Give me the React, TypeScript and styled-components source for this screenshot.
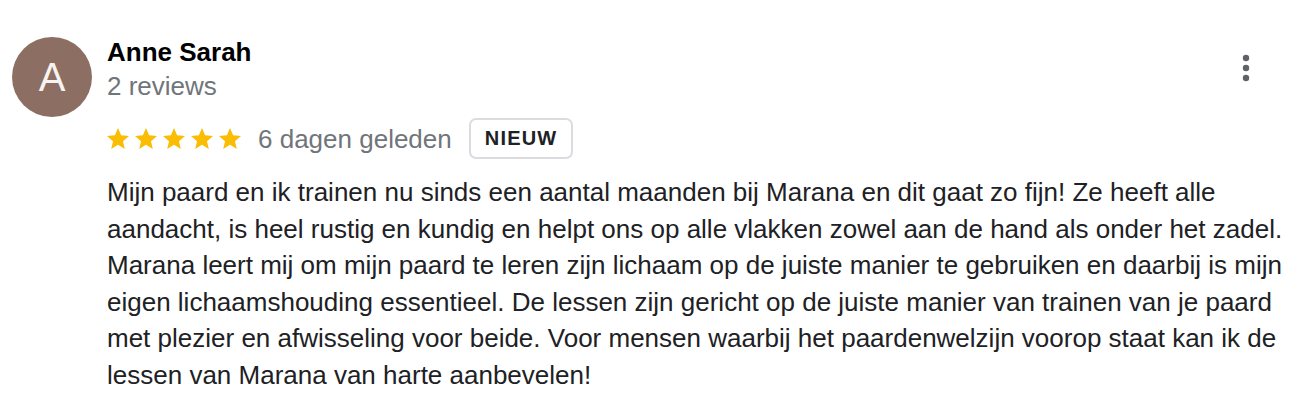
import React from "react";
import styled, { createGlobalStyle } from "styled-components";

const GlobalStyle = createGlobalStyle`
  html, body {
    margin: 0;
    padding: 0;
    background: #ffffff;
  }
  body {
    font-family: "Liberation Sans", Arial, Helvetica, sans-serif;
    -webkit-font-smoothing: antialiased;
  }
`;

const Card = styled.article`
  display: grid;
  grid-template-columns: 80px 1fr 80px;
  column-gap: 15px;
  padding: 35px 20px 0 12px;
  font-size: 26px;
  color: #202124;
`;

const Avatar = styled.div`
  grid-column: 1;
  grid-row: 1 / span 3;
  align-self: start;
  margin-top: 2px;
  width: 80px;
  height: 80px;
  border-radius: 50%;
  background: #8d6e63;
  color: #f7f3f1;
  display: flex;
  align-items: center;
  justify-content: center;
  font-size: 40px;
  line-height: 1;
`;

const Name = styled.div`
  grid-column: 2;
  grid-row: 1;
  font-weight: 700;
  color: #000000;
  line-height: 34px;
`;

const Reviews = styled.div`
  grid-column: 2;
  grid-row: 2;
  color: #70757a;
  line-height: 34px;
`;

const MetaRow = styled.div`
  grid-column: 2;
  grid-row: 3;
  margin-top: 15px;
  display: flex;
  align-items: center;
  gap: 17px;
  height: 41px;
`;

const Stars = styled.div`
  display: flex;
  gap: 6px;
  align-items: center;
`;

const When = styled.span`
  color: #70757a;
  line-height: 34px;
`;

const Badge = styled.span`
  box-sizing: border-box;
  height: 41px;
  display: inline-flex;
  align-items: center;
  padding: 0 14px;
  border: 2px solid #dadce0;
  border-radius: 7px;
  font-size: 20px;
  font-weight: 700;
  letter-spacing: 1.2px;
  color: #202124;
`;

const MenuButton = styled.button`
  grid-column: 3;
  grid-row: 1 / span 2;
  justify-self: center;
  align-self: start;
  margin-top: 13px;
  width: 40px;
  height: 40px;
  padding: 0;
  border: none;
  background: transparent;
  display: flex;
  align-items: center;
  justify-content: center;
  cursor: pointer;
`;

const Body = styled.p`
  grid-column: 2 / 4;
  margin: 15px 0 0;
  line-height: 36.6px;
  color: #202124;
  white-space: nowrap;
`;

const Star = () => (
  <svg width="22" height="22" viewBox="2 2 20 20" aria-hidden="true">
    <path
      fill="#fbbc04"
      d="M12 17.27L18.18 21l-1.64-7.03L22 9.24l-7.19-.61L12 2 9.19 8.63 2 9.24l5.46 4.73L5.82 21z"
    />
  </svg>
);

const Dots = () => (
  <svg width="8" height="28" viewBox="0 0 8 28" aria-hidden="true">
    <circle cx="4" cy="4" r="3.2" fill="#5f6368" />
    <circle cx="4" cy="14" r="3.2" fill="#5f6368" />
    <circle cx="4" cy="24" r="3.2" fill="#5f6368" />
  </svg>
);

const lines = [
  "Mijn paard en ik trainen nu sinds een aantal maanden bij Marana en dit gaat zo fijn! Ze heeft alle",
  "aandacht, is heel rustig en kundig en helpt ons op alle vlakken zowel aan de hand als onder het zadel.",
  "Marana leert mij om mijn paard te leren zijn lichaam op de juiste manier te gebruiken en daarbij is mijn",
  "eigen lichaamshouding essentieel. De lessen zijn gericht op de juiste manier van trainen van je paard",
  "met plezier en afwisseling voor beide. Voor mensen waarbij het paardenwelzijn voorop staat kan ik de",
  "lessen van Marana van harte aanbevelen!",
];

export default function App() {
  return (
    <>
      <GlobalStyle />
      <Card>
        <Avatar>A</Avatar>
        <Name>Anne Sarah</Name>
        <Reviews>2 reviews</Reviews>
        <MenuButton aria-label="Meer opties">
          <Dots />
        </MenuButton>
        <MetaRow>
          <Stars>
            {[0, 1, 2, 3, 4].map((i) => (
              <Star key={i} />
            ))}
          </Stars>
          <When>6 dagen geleden</When>
          <Badge>NIEUW</Badge>
        </MetaRow>
        <Body>
          {lines.map((l, i) => (
            <React.Fragment key={i}>
              {l}
              {i < lines.length - 1 && <br />}
            </React.Fragment>
          ))}
        </Body>
      </Card>
    </>
  );
}
